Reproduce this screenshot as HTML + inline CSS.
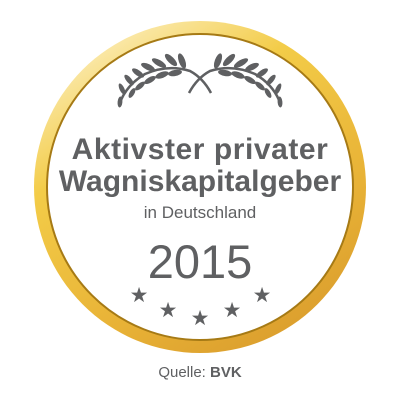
<html><head><style>
body{margin:0;width:400px;height:400px;background:#fff;overflow:hidden;position:relative;font-family:"Liberation Sans",sans-serif;color:#5f6062}
.t{position:absolute;left:0;width:400px;text-align:center;white-space:nowrap}
</style></head><body>
<svg width="400" height="400" style="position:absolute;left:0;top:0">
<defs>
<linearGradient id="g" x1="0.2" y1="0" x2="0.8" y2="1">
<stop offset="0" stop-color="#fcefc0"/><stop offset="0.3" stop-color="#f3cc48"/><stop offset="0.7" stop-color="#e8b236"/><stop offset="1" stop-color="#d99b2c"/>
</linearGradient>
</defs>
<circle cx="200" cy="187" r="166" fill="url(#g)"/>
<circle cx="200" cy="187" r="153" fill="#fff" stroke="#a67a15" stroke-width="2"/>
<g id="L" fill="#5f6062">
<path d="M211 93 Q203 78 190 71 Q168 64 145 74 Q128 84 121 100" fill="none" stroke="#5f6062" stroke-width="2.5"/>
<ellipse cx="182" cy="61" rx="3.2" ry="8" transform="rotate(-20 182 61)"/>
<ellipse cx="171" cy="60" rx="3.2" ry="8" transform="rotate(-45 171 60)"/>
<ellipse cx="175" cy="73" rx="3" ry="7" transform="rotate(-100 175 73)"/>
<ellipse cx="159" cy="63" rx="3" ry="8" transform="rotate(-60 159 63)"/>
<ellipse cx="162" cy="75" rx="3" ry="7" transform="rotate(-110 162 75)"/>
<ellipse cx="148" cy="67" rx="3" ry="7.5" transform="rotate(-65 148 67)"/>
<ellipse cx="150" cy="80" rx="2.8" ry="6.5" transform="rotate(-120 150 80)"/>
<ellipse cx="138" cy="73" rx="2.8" ry="7" transform="rotate(-55 138 73)"/>
<ellipse cx="140" cy="86" rx="2.6" ry="6" transform="rotate(-130 140 86)"/>
<ellipse cx="129" cy="80" rx="2.6" ry="6.5" transform="rotate(-40 129 80)"/>
<ellipse cx="132" cy="93" rx="2.4" ry="5.5" transform="rotate(-150 132 93)"/>
<ellipse cx="122" cy="89" rx="2.4" ry="6" transform="rotate(-25 122 89)"/>
<ellipse cx="120" cy="102" rx="2.4" ry="5.5" transform="rotate(5 120 102)"/>
</g>
<use href="#L" transform="translate(400 0) scale(-1 1)"/>
<g fill="#5f6062">
<text x="139" y="302" font-size="21" text-anchor="middle">★</text>
<text x="168" y="317" font-size="21" text-anchor="middle">★</text>
<text x="200" y="325" font-size="21" text-anchor="middle">★</text>
<text x="232" y="317" font-size="21" text-anchor="middle">★</text>
<text x="262" y="302" font-size="21" text-anchor="middle">★</text>
</g>
</svg>
<div class="t" style="top:133px;font-size:30px;font-weight:bold;letter-spacing:0.55px">Aktivster privater</div>
<div class="t" style="top:165px;font-size:30px;font-weight:bold;letter-spacing:0px">Wagniskapitalgeber</div>
<div class="t" style="top:203px;font-size:17px">in Deutschland</div>
<div class="t" style="top:234px;font-size:47px">2015</div>
<div class="t" style="top:364px;font-size:15px">Quelle: <b>BVK</b></div>
</body></html>
